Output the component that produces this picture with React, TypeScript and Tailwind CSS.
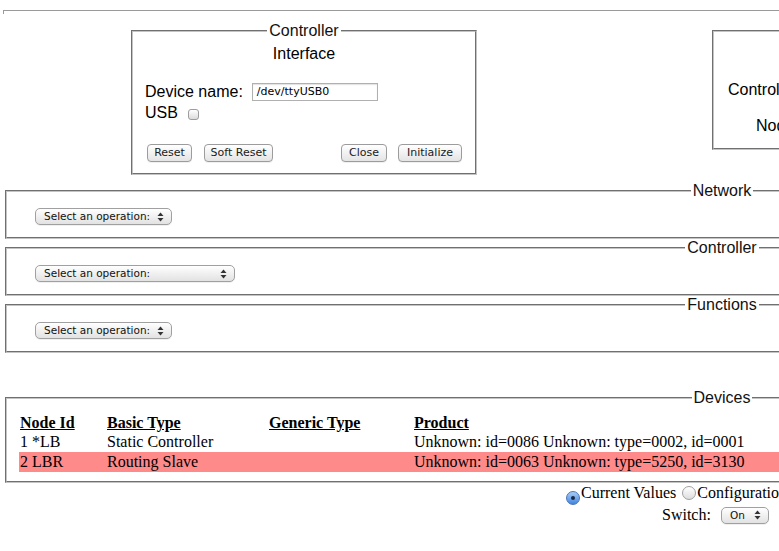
import React from "react";

const SANS = "[font-family:'Liberation_Sans',Arial,sans-serif]";
const UI = "[font-family:'DejaVu_Sans',Verdana,sans-serif]";
const SERIF = "[font-family:'Liberation_Serif','Times_New_Roman',serif]";

function Btn({ children, w }: { children: React.ReactNode; w: string }) {
  return (
    <button
      className={`${w} h-[18px] px-0 text-center rounded-[4px] border border-[#9c9c9c] bg-linear-to-b from-white to-[#e4e4e4] text-[11px] leading-[16px] text-[#1a1a1a] shadow-[0_1px_0_rgba(0,0,0,0.06)] ${UI}`}
    >
      {children}
    </button>
  );
}

function Arrows() {
  return (
    <svg width="7" height="10" viewBox="0 0 7 10" className="shrink-0">
      <path d="M3.5 0.5 L6.5 4 L0.5 4 Z" fill="#333" />
      <path d="M3.5 9.5 L6.5 6 L0.5 6 Z" fill="#333" />
    </svg>
  );
}

function Select({ label, width }: { label: string; width: string }) {
  return (
    <div
      className={`${width} h-[17px] flex items-center justify-between pl-[8px] pr-[7px] rounded-[5px] border border-[#a0a0a0] bg-linear-to-b from-white to-[#e2e2e2] text-[10.5px] leading-[15px] text-[#111] shadow-[0_1px_0_rgba(0,0,0,0.06)] ${UI}`}
    >
      <span>{label}</span>
      <Arrows />
    </div>
  );
}

const FS = "border-2 [border-style:groove] border-[#c4c4c4]";

function Legend({ children }: { children: React.ReactNode }) {
  return (
    <legend className={`mx-auto px-[2px] text-[16px] leading-[18px] text-[#111] ${SANS}`}>{children}</legend>
  );
}

function OpBox({ title, width, top }: { title: string; width: string; top: string }) {
  return (
    <fieldset className={`${FS} mx-[5px] ${top}`}>
      <Legend>{title}</Legend>
      <div className="pl-[28px] pt-[8px] pb-[12px]">
        <Select label="Select an operation:" width={width} />
      </div>
    </fieldset>
  );
}

function Radio({ on }: { on?: boolean }) {
  return on ? (
    <span className="inline-flex w-[14px] h-[14px] rounded-full border border-[#4a74b8] bg-linear-to-b from-[#a9cdf5] to-[#3f86e0] items-center justify-center align-[-2px]">
      <span className="w-[4px] h-[4px] rounded-full bg-[#1b2a44]" />
    </span>
  ) : (
    <span className="inline-block w-[14px] h-[14px] rounded-full border border-[#a0a0a0] bg-linear-to-b from-white to-[#dedede] align-[-2px]" />
  );
}

const rows = [
  { id: "1 *LB", basic: "Static Controller", generic: "", product: "Unknown: id=0086 Unknown: type=0002, id=0001", hl: false },
  { id: "2 LBR", basic: "Routing Slave", generic: "", product: "Unknown: id=0063 Unknown: type=5250, id=3130", hl: true },
];

export default function App() {
  return (
    <div className="w-full h-screen overflow-hidden bg-white text-black">
      <div className="w-[1444px]">
        <div className="pt-[10px]">
          <div className="ml-[3px] h-[4px] border-t border-l border-[#9a9a9a]" />
        </div>

        <div className="flex items-start mt-[8px] pl-[131px]">
          <fieldset className={`${FS} w-[346px] h-[153px] px-[12px] ${SANS}`}>
            <Legend>Controller</Legend>
            <div className="text-center text-[16px] leading-[18px] mt-[5px]">Interface</div>
            <div className="flex items-center h-[20px] mt-[19px] text-[16px]">
              <span>Device name:</span>
              <div className={`ml-[9px] w-[126px] h-[18px] border border-[#b0b0b0] shadow-[inset_0_1px_1px_rgba(0,0,0,0.12)] px-[4px] text-[11px] leading-[16px] ${UI}`}>
                /dev/ttyUSB0
              </div>
            </div>
            <div className="flex items-center h-[18px] mt-[2px] text-[16px]">
              <span>USB</span>
              <span className="ml-[10px] w-[11px] h-[11px] rounded-[3px] border border-[#9c9c9c] bg-linear-to-b from-white to-[#dcdcdc] mt-[3px]" />
            </div>
            <div className="flex items-center justify-between mt-[22px] pl-[2px] pr-[1px]">
              <div className="flex gap-[12px]">
                <Btn w="w-[45px]">Reset</Btn>
                <Btn w="w-[69px]">Soft Reset</Btn>
              </div>
              <div className="flex gap-[11px]">
                <Btn w="w-[46px]">Close</Btn>
                <Btn w="w-[64px]">Initialize</Btn>
              </div>
            </div>
          </fieldset>

          <fieldset className={`${FS} ml-[235px] w-[300px] h-[128px] ${SANS}`}>
            <Legend>&nbsp;</Legend>
            <div className="text-[16px] leading-[18px] mt-[41px] pl-[14px]">Controller Type:</div>
            <div className="text-[16px] leading-[18px] mt-[18px] pl-[42px]">Node Id:</div>
          </fieldset>
        </div>

        <div className="flex flex-col">
          <OpBox title="Network" width="w-[137px]" top="mt-[7px]" />
          <OpBox title="Controller" width="w-[200px]" top="mt-0" />
          <OpBox title="Functions" width="w-[137px]" top="mt-0" />
        </div>

        <fieldset className={`${FS} mx-[5px] mt-[36px] pt-[6px] pb-[9px]`}>
          <Legend>Devices</Legend>
          <div className={`pl-[12px] pr-[12px] text-[16px] leading-[20px] ${SERIF}`}>
            <div className="grid grid-cols-[88px_162px_145px_1fr] font-bold h-[19px] leading-[19px]">
              <span className="pl-[1px]"><span className="underline">Node Id</span></span>
              <span><span className="underline">Basic Type</span></span>
              <span><span className="underline">Generic Type</span></span>
              <span><span className="underline">Product</span></span>
            </div>
            {rows.map((r) => (
              <div
                key={r.id}
                className={`grid grid-cols-[88px_162px_145px_1fr] ${r.hl ? "bg-[#ff8a8a]" : ""}`}
              >
                <span className="pl-[1px]">{r.id}</span>
                <span>{r.basic}</span>
                <span>{r.generic}</span>
                <span>{r.product}</span>
              </div>
            ))}
          </div>
        </fieldset>

        <div className={`mt-[1px] pl-[566px] text-[16px] leading-[18px] ${SERIF}`}>
          <Radio on />
          <span className="ml-[1px]">Current Values </span>
          <span className="ml-[2px]"><Radio /></span>
          <span className="ml-[1px]">Configuration </span>
          <Radio />
          <span>Information</span>
        </div>
        <div className={`mt-0 pl-[662px] flex items-center text-[16px] leading-[20px] ${SERIF}`}>
          <span>Switch:</span>
          <div className="ml-[10px]">
            <Select label="On" width="w-[48px]" />
          </div>
        </div>
      </div>
    </div>
  );
}
